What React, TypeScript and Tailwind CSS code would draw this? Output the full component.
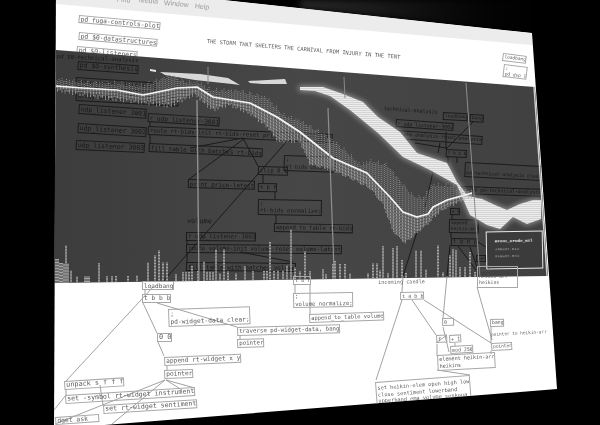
type Box = { x: number; y: number; w: number; h?: number; t: string; r: number; fs?: number };

const topNodes: Box[] = [
  { x: 79, y: 15, w: 82, h: 8, t: "pd fuga-controls-plot", r: 5 },
  { x: 79, y: 32, w: 79, h: 8, t: "pd $0-datastructures", r: 5 },
  { x: 77, y: 46, w: 61, h: 8, t: "pd $0-listeners", r: 5 },
  { x: 503, y: 53, w: 24, h: 8, t: "loadbang", r: 7 },
  { x: 504, y: 64, w: 24, h: 13, t: ";\npd dsp 1", r: 7 },
];

const topLabels: Box[] = [
  { x: 207, y: 39, w: 195, t: "THE STORM THAT SHELTERS THE CARNIVAL FROM INJURY IN THE TENT", r: 4.7 },
];

const menu = [
  { x: 117, y: -4, t: "Find" },
  { x: 139, y: -3, t: "Media" },
  { x: 164, y: 0, t: "Window" },
  { x: 195, y: 3, t: "Help" },
];

const darkNodes: Box[] = [
  { x: 78, y: 61, w: 61, h: 9, t: "pd $0-synthesis", r: 4 },
  { x: 76, y: 77, w: 80, h: 10, t: "array define -k rt-asks", r: 4 },
  { x: 76, y: 92, w: 103, h: 9, t: "array define -k rt-volume-arr", r: 3 },
  { x: 79, y: 104, w: 68, h: 10, t: "udp_listener 3001", r: 4 },
  { x: 78, y: 123, w: 69, h: 10, t: "udp_listener 3002", r: 3.5 },
  { x: 76, y: 140, w: 69, h: 10, t: "udp_listener 3003", r: 2.5 },
  { x: 148, y: 113, w: 72, h: 9, t: "r udp_listener-3001", r: 3.5 },
  { x: 148, y: 126, w: 185, h: 9, t: "route rt-bids-init rt-bids-reset price-latest rt-bids", r: 2.5 },
  { x: 149, y: 143, w: 114, h: 9, t: "fill_table_with batches rt-bids", r: 2.7 },
  { x: 188, y: 179, w: 67, h: 9, t: "print price-latest", r: 1.5 },
  { x: 258, y: 166, w: 30, h: 9, t: "clip 0 1", r: 1.5 },
  { x: 258, y: 183, w: 19, h: 9, t: "t b f", r: 1 },
  { x: 284, y: 155, w: 52, h: 16, t: ";\nrt-bids constant", r: 2 },
  { x: 258, y: 199, w: 64, h: 16, t: ";\nrt-bids normalize;", r: 1 },
  { x: 274, y: 223, w: 79, h: 9, t: "append_to_table rt-bids", r: 1 },
  { x: 186, y: 232, w: 70, h: 9, t: "r udp_listener-3003", r: 0.5 },
  { x: 186, y: 244, w: 156, h: 9, t: "route volume-init volume-reset volume-latest", r: 0.5 },
  { x: 186, y: 262, w: 110, h: 9, t: "fill_table_with batches volume", r: 0.5 },
  { x: 443, y: 112, w: 25, h: 8, t: "loadbang", r: 3 },
  { x: 470, y: 114, w: 14, h: 8, t: "bang", r: 3, fs: 4.6 },
  { x: 396, y: 119, w: 58, h: 8, t: "r udp_listener-3002", r: 4 },
  { x: 396, y: 130, w: 87, h: 9, t: "route analysis-reset analysis", r: 4 },
  { x: 446, y: 149, w: 21, h: 8, t: "t b b b", r: 3 },
  { x: 465, y: 162, w: 77, h: 15, t: ";\npd-technical-analysis clear", r: 3 },
  { x: 461, y: 186, w: 81, h: 8, t: "parse pd-technical-analysis", r: 2 },
  { x: 470, y: 196, w: 9, h: 8, t: "1;", r: 2, fs: 4 },
  { x: 450, y: 208, w: 10, h: 7, t: "0 0", r: 1 },
  { x: 449, y: 219, w: 30, h: 14, t: "append\nheikin-arr", r: 1 },
  { x: 451, y: 238, w: 27, h: 8, t: "t b b p", r: 1 },
  { x: 476, y: 255, w: 10, h: 7, t: "set", r: 0, fs: 4 },
];

const darkLabels: Box[] = [
  { x: 57, y: 54, w: 82, t: "pd $0-technical-analysis", r: 3 },
  { x: 150, y: 101, w: 25, t: "rt-bids", r: 2 },
  { x: 187, y: 218, w: 25, t: "volume", r: 1 },
  { x: 384, y: 106, w: 54, t: "technical-analysis", r: 4 },
];

const lowerNodes: Box[] = [
  { x: 142, y: 281, w: 32, h: 9, t: "loadbang", r: 0 },
  { x: 142, y: 294, w: 29, h: 9, t: "t b b b", r: 0 },
  { x: 168, y: 309, w: 82, h: 18, t: ";\npd-widget-data clear;", r: -2 },
  { x: 237, y: 327, w: 103, h: 9, t: "traverse pd-widget-data, bang", r: -1.5 },
  { x: 237, y: 339, w: 27, h: 9, t: "pointer", r: -1.5 },
  { x: 157, y: 333, w: 15, h: 9, t: "0 0", r: 0 },
  { x: 164, y: 357, w: 77, h: 9, t: "append rt-widget x y", r: -2.5 },
  { x: 164, y: 370, w: 29, h: 9, t: "pointer", r: -2 },
  { x: 64, y: 381, w: 60, h: 9, t: "unpack s f f f", r: -3.5 },
  { x: 65, y: 395, w: 130, h: 9, t: "set -symbol rt-widget instrument", r: -3.5 },
  { x: 103, y: 405, w: 94, h: 9, t: "set rt-widget sentiment", r: -3.5 },
  { x: 55, y: 417, w: 44, h: 8, t: "dget ask", r: -4, fs: 6.4 },
  { x: 293, y: 276, w: 18, h: 9, t: "t b f", r: 0 },
  { x: 293, y: 293, w: 60, h: 15, t: ";\nvolume normalize;", r: -1 },
  { x: 309, y: 314, w: 75, h: 9, t: "append_to_table volume", r: -2 },
  { x: 400, y: 292, w: 24, h: 8, t: "t a b b", r: -1 },
  { x: 442, y: 318, w: 12, h: 8, t: "0", r: -1, fs: 5 },
  { x: 436, y: 335, w: 11, h: 8, t: "f", r: -3, fs: 5 },
  { x: 449, y: 335, w: 12, h: 8, t: "+ 1", r: -3, fs: 5 },
  { x: 450, y: 346, w: 23, h: 8, t: "mod 256", r: -3 },
  { x: 437, y: 355, w: 58, h: 16, t: "element heikin-arr\nheikins", r: -3 },
  { x: 490, y: 319, w: 14, h: 8, t: "bang", r: -1, fs: 4.8 },
  { x: 491, y: 343, w: 21, h: 8, t: "pointer", r: -3 },
  { x: 375, y: 382, w: 95, h: 26, t: "set heikin-elem open high low\nclose sentiment lowerband\nupperband ema volume senkoua", r: -4.2 },
  { x: 477, y: 266, w: 41, h: 22, t: "setl\nheikin-arr\nheikins", r: 0, fs: 4.8 },
];

const lowerLabels: Box[] = [
  { x: 378, y: 280, w: 47, t: "incoming candle", r: -1 },
  { x: 491, y: 333, w: 56, t: "pointer to heikin-arr", r: -3 },
];

type Wire = [number, number, number, number];

const darkWires: Wire[] = [
  [245, 138, 188, 180], [243, 138, 258, 166], [288, 140, 160, 285], [190, 148, 243, 138],
  [263, 175, 263, 183], [275, 192, 275, 199], [276, 215, 276, 223], [150, 122, 150, 126],
  [150, 135, 150, 143], [187, 241, 187, 244], [187, 253, 187, 262], [240, 252, 293, 262],
  [473, 122, 446, 149], [415, 143, 446, 148], [440, 143, 438, 153], [446, 132, 446, 149],
  [448, 157, 448, 168], [457, 157, 457, 163], [433, 172, 425, 207], [417, 232, 403, 276],
  [452, 215, 452, 219], [451, 233, 451, 238], [478, 242, 517, 267], [470, 247, 477, 267],
  [450, 245, 447, 276], [458, 246, 476, 270],
];

const lightWires: Wire[] = [
  [153, 287, 66, 381], [403, 276, 402, 292], [402, 300, 376, 380], [447, 276, 443, 318],
  [412, 300, 436, 335], [424, 300, 491, 343], [447, 335, 436, 343], [443, 327, 449, 352],
  [437, 344, 437, 356], [455, 343, 455, 346], [491, 351, 491, 354], [491, 327, 491, 343],
  [437, 370, 470, 375], [477, 287, 492, 340], [145, 290, 145, 294], [143, 303, 157, 333],
  [158, 342, 164, 356], [157, 303, 237, 327], [240, 335, 240, 339], [167, 366, 167, 370],
  [165, 380, 55, 424], [165, 380, 112, 424], [166, 380, 195, 388], [166, 380, 182, 390],
  [66, 395, 54, 410], [66, 389, 66, 395], [100, 385, 103, 405], [310, 285, 310, 314],
  [295, 285, 295, 293],
];

// x and height of the volume bars
const bars: [number, number][] = [
  [56, 24], [58, 24], [60, 20], [62, 20], [64, 19], [66, 37], [68, 19], [71, 12], [77, 6],
  [85, 6], [87, 6], [89, 6], [99, 19], [107, 6], [112, 6], [116, 6], [128, 6], [137, 6],
  [148, 19], [155, 26], [159, 31], [163, 19], [167, 19], [176, 7], [183, 9], [186, 9],
  [189, 9], [192, 15], [198, 10], [204, 19], [207, 9], [210, 9], [213, 9], [216, 31],
  [220, 7], [224, 31], [228, 9], [236, 7], [245, 14], [253, 9], [264, 9], [267, 9], [270, 38],
  [274, 9], [278, 9], [283, 9], [287, 14], [291, 50], [295, 12], [300, 8], [305, 28],
  [310, 8], [323, 10], [326, 5], [333, 15], [335, 18], [340, 15], [345, 15], [350, 5],
  [368, 5], [373, 15], [377, 15], [380, 8], [383, 32], [388, 5], [393, 30], [397, 32],
  [402, 18], [406, 5], [416, 27], [421, 27], [426, 8], [438, 32], [443, 5], [450, 22],
  [453, 28], [456, 27], [460, 10], [465, 10], [470, 25], [475, 5],
];

const baseline = (x: number) => 283 - ((x - 54) * 7) / 494;

type Pt = [number, number];

const upperEdge: Pt[] = [[56, 81], [80, 84], [115, 85], [140, 88], [160, 82], [170, 77], [185, 84], [200, 85], [210, 92], [240, 93], [267, 100], [283, 117], [300, 123], [330, 140], [350, 157], [360, 167], [370, 163], [387, 167], [400, 183], [413, 198], [423, 200], [432, 187], [450, 188], [460, 192], [472, 193]];
const lowerEdge: Pt[] = [[56, 88], [100, 95], [140, 100], [170, 104], [195, 92], [203, 100], [213, 108], [230, 103], [250, 112], [267, 125], [278, 140], [300, 140], [310, 163], [330, 168], [353, 178], [370, 187], [383, 203], [393, 230], [405, 242], [413, 235], [427, 223], [440, 210], [453, 203], [472, 195]];
const priceLine: Pt[] = [[56, 86], [83, 88], [117, 90], [143, 95], [177, 88], [197, 87], [213, 97], [250, 103], [277, 117], [300, 132], [333, 158], [367, 173], [390, 197], [403, 212], [417, 217], [428, 214], [433, 207], [447, 200], [472, 193]];
const cloud = "300,87 323,87 343,94 363,102 378,117 400,132 417,153 447,163 457,182 468,196 482,199 495,205 507,210 520,204 533,200 541,200 541,219 527,224 513,217 500,229 487,225 470,215 457,185 430,170 403,157 378,133 350,110 330,96 315,91 300,90";

const toPoints = (pts: Pt[]) => pts.map((p) => p.join(",")).join(" ");

const at = (pts: Pt[], x: number) => {
  for (let i = 1; i < pts.length; i++) {
    if (x <= pts[i][0]) {
      const [x0, y0] = pts[i - 1];
      const [x1, y1] = pts[i];
      return y0 + ((x - x0) / (x1 - x0)) * (y1 - y0);
    }
  }
  return pts[pts.length - 1][1];
};

// the band is drawn as short columns, so that its edges come out ragged
const columns: number[] = [];
for (let x = 56; x < 472; x += 1.5) columns.push(x);
const jag = (x: number, k: number) => Math.abs(Math.sin(x * k) + Math.sin(x * 0.37)) * 2.2;

const DiagramBox = ({ n, tone }: { n: Box; tone: "light" | "dark" }) => {
  const lines = n.t.split("\n");
  const chars = Math.max(...lines.map((l) => l.length));
  const fs = n.fs ?? (n.w - 2.5) / (chars * 0.602);
  return (
    <div
      className={`absolute flex origin-top-left flex-col justify-center overflow-hidden whitespace-pre border px-px font-['DejaVu_Sans_Mono',monospace] ${
        tone === "light" ? "border-[#a8a8a8] text-[#5c5c5c]" : "border-[#1c1c1c] text-[#181818]"
      }`}
      style={{ left: n.x, top: n.y, width: n.w, height: n.h, fontSize: fs, lineHeight: 1.3, transform: `rotate(${n.r}deg)` }}
    >
      {lines.map((l, i) => (
        <div key={i}>{l || " "}</div>
      ))}
    </div>
  );
};

const Comment = ({ n, color }: { n: Box; color: string }) => (
  <div
    className={`absolute origin-top-left whitespace-pre font-['DejaVu_Sans_Mono',monospace] leading-none ${color}`}
    style={{ left: n.x, top: n.y, fontSize: n.w / (n.t.length * 0.602), transform: `rotate(${n.r}deg)` }}
  >
    {n.t}
  </div>
);

const Wires = ({ wires, color }: { wires: Wire[]; color: string }) => (
  <svg className="absolute inset-0" width={600} height={425} fill="none">
    {wires.map((w, i) => (
      <line key={i} x1={w[0]} y1={w[1]} x2={w[2]} y2={w[3]} stroke={color} strokeWidth={0.8} />
    ))}
  </svg>
);

const Chart = () => (
  <svg className="absolute inset-0" width={600} height={425} fill="none">
    <defs>
      <pattern id="rows" width="3" height="2" patternUnits="userSpaceOnUse">
        <rect width="3" height="2" fill="#ececec" />
        <rect width="3" height="0.6" fill="#c4c4c4" />
      </pattern>
    </defs>
    {/* halo round the cloud */}
    <polygon points={cloud} fill="#8c8c8c" stroke="#8c8c8c" strokeWidth="3" className="blur-[2.5px]" />
    <polygon points={cloud} fill="url(#rows)" />
    <polygon points="150,69 156,70 156,72 150,71" fill="#e6e6e6" />
    <polygon points="160,72 200,74 228,78 240,85 232,84 195,80 165,75" fill="#d8d8d8" />
    <polygon points="248,81 285,79 287,84 262,84 250,83" fill="#d8d8d8" />
    {columns.map((x) => (
      <line
        key={x}
        x1={x}
        x2={x}
        y1={at(upperEdge, x) - jag(x, 1.3)}
        y2={at(priceLine, x)}
        stroke="#989898"
        strokeWidth={0.8}
        strokeDasharray="1 1"
      />
    ))}
    {columns.map((x) => (
      <line
        key={x}
        x1={x}
        x2={x}
        y1={at(priceLine, x)}
        y2={at(lowerEdge, x) + jag(x, 2.1)}
        stroke="#ababab"
        strokeWidth={0.8}
        strokeDasharray="2.5 0.5"
      />
    ))}
    {bars.map(([x, h]) => (
      <line key={x} x1={x} x2={x} y1={baseline(x) - h} y2={baseline(x)} stroke="#a4a4a4" strokeWidth={2} strokeDasharray="1 0.5" />
    ))}
    <polyline points={toPoints(priceLine)} stroke="#f4f4f4" strokeWidth={1.7} strokeLinejoin="round" />
    {/* light vertical cursors */}
    <line x1={197} y1={100} x2={199} y2={285} stroke="#8f8f8f" strokeWidth={1.4} />
    <line x1={208} y1={67} x2={208} y2={84} stroke="#888" />
    <line x1={344} y1={77} x2={345} y2={98} stroke="#888" />
    <line x1={328} y1={108} x2={334} y2={270} stroke="#8f8f8f" strokeWidth={1.2} />
    <line x1={466} y1={83} x2={480} y2={278} stroke="#8f8f8f" />
    <line x1={534} y1={87} x2={547} y2={276} stroke="#d0d0d0" strokeWidth={1.4} />
  </svg>
);

const Legend = () => (
  <div className="absolute left-[486px] top-[231px] flex h-[38px] w-[57px] -rotate-1 flex-col border border-[#e8e8e8] bg-[#3b3b3b] px-2 pt-[7px] font-['Liberation_Mono',monospace]">
    <div className="whitespace-pre text-[4.2px] font-bold leading-none text-white">Brent_Crude_Oil</div>
    <div className="mt-[3px] whitespace-pre text-[4px] leading-[6.5px] text-[#a8a8a8]">256=37.614</div>
    <div className="whitespace-pre text-[4px] leading-[6.5px] text-[#a8a8a8]">819=37.574</div>
  </div>
);

export default function App() {
  return (
    <div className="relative h-[425px] w-[600px] overflow-hidden bg-black">
      <div className="absolute inset-0 blur-[3px]">
        <div className="absolute inset-0 bg-gradient-to-l from-[#000] via-[#2a2a2a] to-[#3a3a3a] [clip-path:polygon(300px_-5px,530px_-5px,532px_33px,300px_8px)]" />
      </div>
      <div className="absolute inset-0 blur-[0.7px]">
        {/* patch window */}
        <div className="absolute inset-0 bg-white [clip-path:polygon(56px_-18px,532px_33px,557px_389px,54px_429px)]">
          <div className="absolute inset-0 bg-[#ececec] [clip-path:polygon(56px_-18px,532px_33px,532px_45px,56px_4px)]" />
          {menu.map((m) => (
            <div
              key={m.t}
              className="absolute rotate-[5deg] font-['Liberation_Sans',sans-serif] text-[7px] leading-none text-[#9c9c9c]"
              style={{ left: m.x, top: m.y }}
            >
              {m.t}
            </div>
          ))}
          {topNodes.map((n) => (
            <DiagramBox key={n.t} n={n} tone="light" />
          ))}
          {topLabels.map((n) => (
            <Comment key={n.t} n={n} color="text-[#5c5c5c]" />
          ))}
        </div>

        {/* dark canvas: the patch lies under the chart */}
        <div className="absolute inset-0 bg-gradient-to-r from-[#3a3a3a] via-[#474747] to-[#3f3f3f] [clip-path:polygon(56px_50px,535px_87px,548px_276px,54px_283px)]">
          <Wires wires={darkWires} color="#101010" />
          {darkNodes.map((n) => (
            <DiagramBox key={n.t} n={n} tone="dark" />
          ))}
          {darkLabels.map((n) => (
            <Comment key={n.t} n={n} color="text-[#181818]" />
          ))}
          <Chart />
          <Legend />
        </div>

        {/* lower half of the patch */}
        <div className="absolute inset-0 [clip-path:polygon(54px_270px,557px_260px,557px_389px,54px_429px)]">
          <Wires wires={lightWires} color="#8a8a8a" />
          {lowerNodes.map((n) => (
            <DiagramBox key={n.t + n.x} n={n} tone="light" />
          ))}
          {lowerLabels.map((n) => (
            <Comment key={n.t} n={n} color="text-[#6a6a6a]" />
          ))}
        </div>
      </div>
    </div>
  );
}
